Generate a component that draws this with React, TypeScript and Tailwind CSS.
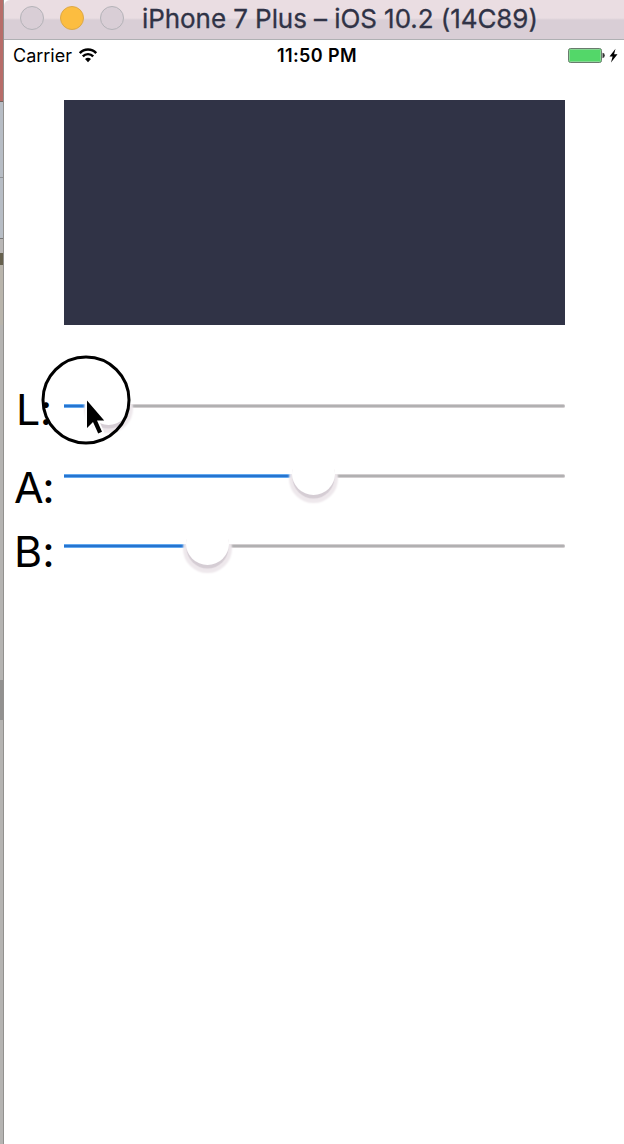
type SliderProps = {
  label: string;
  labelClass: string;
  fillClass: string;
  thumbClass: string;
};

function Slider({ label, labelClass, fillClass, thumbClass }: SliderProps) {
  return (
    <div className="flex h-[70px] items-center">
      <span
        className={`w-[60px] shrink-0 whitespace-nowrap text-[43px] leading-[52px] text-black [font-feature-settings:'calt'_0] ${labelClass}`}
      >
        {label}
      </span>
      <div className="relative flex h-1 w-[501px] items-center rounded-full border-y border-[#d2ced0] bg-[#b1b0b1]">
        <div className={`-my-px h-1 shrink-0 border-y border-[#64aaf0] bg-[#2774cf] ${fillClass}`} />
        <div
          className={`absolute top-[-23px] size-[43px] rounded-full bg-white shadow-[0_4px_1px_-0.5px_#d5cdd4,0_5px_2px_3px_#eee8ec] ${thumbClass}`}
        />
        <div
          className={`absolute top-[-24px] h-[23px] w-[51px] -translate-x-1 bg-white [clip-path:polygon(0_0,100%_0,100%_100%,92%_100%,92%_80%,8%_80%,8%_100%,0_100%)] ${thumbClass}`}
        />
      </div>
    </div>
  );
}

function TitleBar() {
  return (
    <div className="flex h-10 items-center rounded-tl-[6px] border-b border-[#afb0b3] bg-[linear-gradient(#eadde2_0_18px,#d9ced6_20px)] pl-4 pb-[3px]">
      <div className="flex gap-4">
        <span className="size-6 rounded-full border border-[#b4b3b8] bg-[#d9ced6]" />
        <span className="size-6 rounded-full border border-[#dca849] bg-[#fcbd40]" />
        <span className="size-6 rounded-full border border-[#b4b3b8] bg-[#d9ced6]" />
      </div>
      <span className="ml-[18px] whitespace-nowrap pt-0.5 text-[26px] leading-8 tracking-[-0.07px] text-[#303346] [font-feature-settings:'calt'_0] [-webkit-text-stroke:0.3px_#303346]">
        iPhone 7 Plus – iOS 10.2 (14C89)
      </span>
    </div>
  );
}

function StatusBar() {
  return (
    <div className="grid h-8 grid-cols-[1fr_auto_1fr] items-center text-[18px] leading-8 text-black">
      <div className="flex items-center pl-[9px]">
        <span className="w-[65px] whitespace-nowrap">Carrier</span>
        <svg width="20" height="16" viewBox="0 0 20 16" fill="none" stroke="black">
          <path d="M1.8 5.1a11.2 11.2 0 0 1 16.4 0" strokeWidth="2.5" />
          <path d="M4.8 8.4a7 7 0 0 1 10.4 0" strokeWidth="2.4" />
          <path d="M7 11a4.5 4.5 0 0 1 6 0l-3 3.3Z" fill="black" stroke="none" />
        </svg>
      </div>
      <span className="whitespace-nowrap pl-1.5 font-semibold tracking-[0.4px] [font-feature-settings:'calt'_0]">
        11:50 PM
      </span>
      <div className="flex items-center justify-end pr-[5px]">
        <svg width="51" height="16" viewBox="0 0 51 16">
          <rect x="0.5" y="0.5" width="33" height="14" rx="2" fill="#53d769" stroke="#697b6d" />
          <rect x="1.5" y="1.5" width="31" height="12" rx="1" fill="none" stroke="#86d894" />
          <path d="M34.5 4.8q2.3.3 2.3 2.7t-2.3 2.7Z" fill="#333" />
          <path d="M47.5.8 41.5 8.4h3.1L43 14.4l6.5-8.2h-3.4Z" fill="black" />
        </svg>
      </div>
    </div>
  );
}

function DesktopEdge() {
  return (
    <div className="flex h-full w-1 shrink-0 flex-col border-r border-[#92918f] bg-[#b5b4b2]">
      <div className="h-[101px] bg-[#b76d69]" />
      <div className="h-px bg-[#756360]" />
      <div className="h-[75px] bg-[#b7bdc5]" />
      <div className="h-px bg-[#8e9296]" />
      <div className="h-[60px] bg-[#b7bdc5]" />
      <div className="h-px bg-[#777777]" />
      <div className="h-[14px] bg-[#b9b7b6]" />
      <div className="h-[12px] bg-[#66614e]" />
      <div className="h-[60px] bg-[#b9b5ac]" />
      <div className="h-[355px]" />
      <div className="h-10 bg-[#929190]" />
    </div>
  );
}

function Pointer() {
  return (
    <svg className="absolute left-[41px] top-[355px]" width="92" height="92" viewBox="0 0 92 92" fill="none">
      <circle cx="45" cy="45" r="43" stroke="black" strokeWidth="3" />
      <path
        d="M46 45.5v27.5l6-6 5.2 11.5 3.8-1.8-5-11.2h7.2Z"
        fill="black"
        stroke="white"
        strokeWidth="3.6"
        paintOrder="stroke"
      />
    </svg>
  );
}

export default function App() {
  return (
    <div className="relative flex h-[1144px] w-[624px] overflow-hidden bg-white font-['Inter',sans-serif]">
      <DesktopEdge />
      <main className="min-w-0 flex-1">
        <TitleBar />
        <StatusBar />
        <div className="ml-[60px] mt-7 h-[225px] w-[501px] bg-[#303346]" />
        <div className="mt-[46px]">
          <Slider label="L:" labelClass="pl-[12px] pt-[5px] tracking-[-0.5px]" fillClass="w-[44px]" thumbClass="left-[23px]" />
          <Slider label="A:" labelClass="pl-[10px] pt-[21px] tracking-[-1.5px]" fillClass="w-[249px]" thumbClass="left-[228px]" />
          <Slider label="B:" labelClass="pl-[10px] pt-[9px]" fillClass="w-[143px]" thumbClass="left-[122px]" />
        </div>
      </main>
      <Pointer />
    </div>
  );
}
